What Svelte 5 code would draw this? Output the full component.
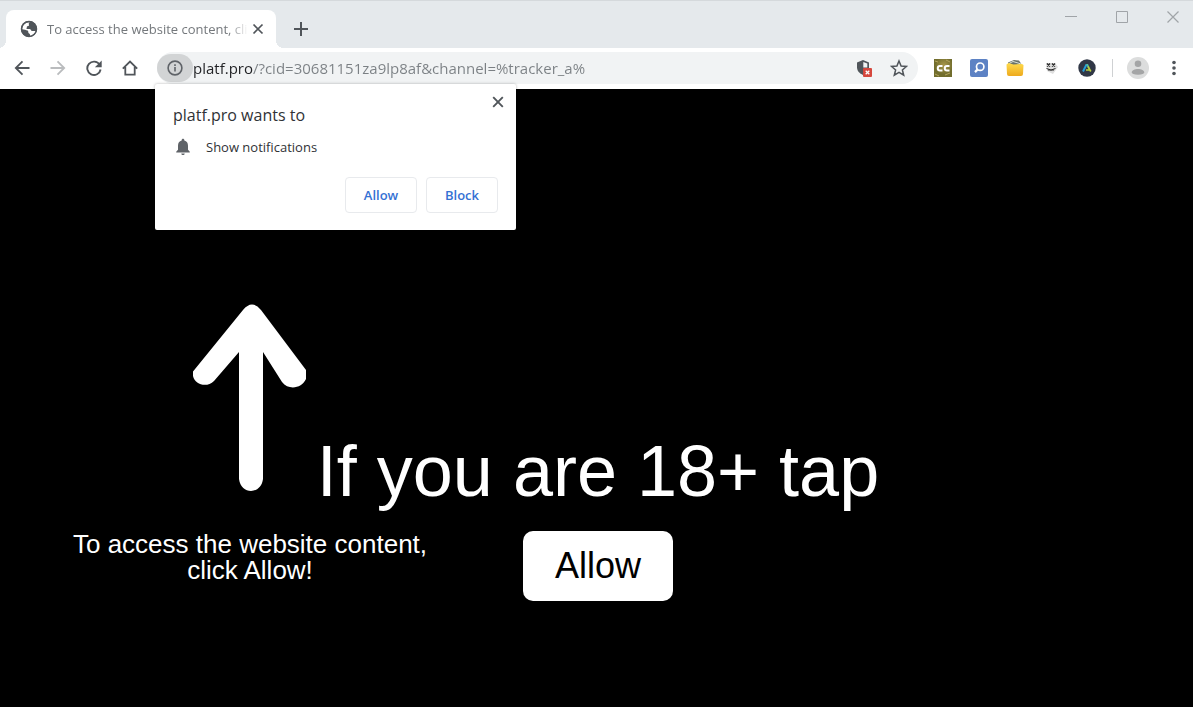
<script lang="ts">
  let url = $state('platf.pro/?cid=30681151za9lp8af&channel=%tracker_a%');
  let promptOpen = $state(true);

  function closePrompt(): void {
    promptOpen = false;
  }
</script>

<div class="browser">
  <header class="tab-strip">
    <div class="tab">
      <svg class="globe" viewBox="0 0 18 18" width="18" height="18" aria-hidden="true">
        <circle cx="9" cy="9" r="8" fill="#50555a" />
        <path d="M10 2.2c-1.2.6-1.5 1.3-1.1 2.4.5 1.1-.4 1.5-1.5 1.7-.9.2-.4 1.3-.8 1.9-.6.8 1 1.1 2.3.8 1.7-.3 1.9.6 2.3 1.5.4.8 1.6.6 2.7.6h1.9c-.7 2.6-3 4.7-5.8 5v-1.7c-.2-.9-1.3-.8-1.6-1.7-.3-1 .1-1.5-.8-2.1C6.300 10.100 4 9.700 2.100 9.300 1.900 5.600 5.500 1.900 10 2.200z" fill="#fff" />
        <path d="M9.800 2.100c3 .1 5.200 2.100 5.900 4.700-1.300.9-2.500.6-3.100-.3-.5-.8-1.700-.4-2.400-1.100-.8-.9.200-1.500-.4-3.300z" fill="#50555a" />
        <circle cx="9" cy="9" r="7.500" fill="none" stroke="#50555a" stroke-width="1.500" />
      </svg>
      <span class="tab-title">To access the website content, cli</span>
      <button type="button" class="tab-close" aria-label="Close tab">
        <svg viewBox="0 0 12 12" width="12" height="12"><path d="M1.500 1.500l9 9m0-9l-9 9" stroke="#50555a" stroke-width="1.700" /></svg>
      </button>
    </div>
    <button type="button" class="new-tab" aria-label="New tab">
      <svg viewBox="0 0 14 14" width="14" height="14"><path d="M7 0v14M0 7h14" stroke="#50555a" stroke-width="2" /></svg>
    </button>
    <div class="window-controls">
      <button type="button" aria-label="Minimize">
        <svg viewBox="0 0 12 12" width="12" height="12"><path d="M0 5.500h12" stroke="#a0a4a8" /></svg>
      </button>
      <button type="button" aria-label="Maximize">
        <svg viewBox="0 0 12 12" width="12" height="12"><path d="M.5.5h11v11H.5z" fill="none" stroke="#a0a4a8" /></svg>
      </button>
      <button type="button" aria-label="Close">
        <svg viewBox="0 0 12 12" width="12" height="12"><path d="M.5.5l11 11m0-11l-11 11" stroke="#a0a4a8" stroke-width="1.200" /></svg>
      </button>
    </div>
  </header>

  <nav class="toolbar">
    <button type="button" class="tool" aria-label="Back">
      <svg viewBox="0 0 16 16" width="16" height="16"><path d="M15.500 8H2m6.500-6.700L1.800 8l6.700 6.700" fill="none" stroke="#50555a" stroke-width="1.800" /></svg>
    </button>
    <button type="button" class="tool" aria-label="Forward">
      <svg viewBox="0 0 16 16" width="16" height="16"><path d="M.5 8H14M7.500 1.300L14.200 8l-6.700 6.700" fill="none" stroke="#babcbe" stroke-width="1.800" /></svg>
    </button>
    <button type="button" class="tool" aria-label="Reload">
      <svg viewBox="0 0 16 16" width="16" height="16">
        <path d="M13.600 4.600A6.700 6.700 0 1 0 14.600 9.500" fill="none" stroke="#50555a" stroke-width="1.900" />
        <path d="M15.700.4v6.800H8.900z" fill="#50555a" />
      </svg>
    </button>
    <button type="button" class="tool" aria-label="Home">
      <svg viewBox="0 0 16 16" width="16" height="16"><path d="M.8 8.600L8 1.500l7.200 7.100M3.300 7v7.600h9.400V7" fill="none" stroke="#50555a" stroke-width="1.800" /></svg>
    </button>

    <div class="omnibox">
      <button type="button" class="site-info" aria-label="View site information">
        <svg viewBox="0 0 16 16" width="16" height="16">
          <circle cx="8" cy="8" r="6.900" fill="none" stroke="#5f6368" stroke-width="1.600" />
          <path d="M8 7v4.500M8 4.200v1.700" stroke="#5f6368" stroke-width="1.600" />
        </svg>
      </button>
      <input class="url" type="text" aria-label="Address and search bar" spellcheck="false" bind:value={url} />
      <button type="button" class="box-icon" aria-label="Blocked content">
        <svg viewBox="0 0 18 18" width="18" height="18">
          <path d="M8 1.100l6 2.400v4.700c0 3.700-2.500 6.300-6 7.700-3.500-1.400-6-4-6-7.700V3.500z" fill="#50555a" />
          <path d="M8.300 2.900l4 1.600v4H8.300z" fill="#f1f3f4" />
          <rect x="8" y="9" width="9" height="9" rx="1" fill="#d5473d" />
          <path d="M10.700 11.700l3.600 3.600m0-3.600l-3.600 3.600" stroke="#fff" stroke-width="1.300" />
        </svg>
      </button>
      <button type="button" class="box-icon" aria-label="Bookmark this page">
        <svg viewBox="0 0 18 18" width="18" height="18"><path d="M9 2l2.100 5 5.400.4-4.100 3.500 1.300 5.300L9 13.300l-4.700 2.900 1.300-5.300-4.100-3.500L6.900 7z" fill="none" stroke="#50555a" stroke-width="1.500" /></svg>
      </button>
    </div>

    <div class="extensions">
      <button type="button" class="tool" aria-label="CC extension">
        <svg viewBox="0 0 18 18" width="18" height="18">
          <defs>
            <radialGradient id="moss" cx="55%" cy="35%"><stop offset="0" stop-color="#aa984b" /><stop offset="1" stop-color="#716d2d" /></radialGradient>
          </defs>
          <rect width="18" height="18" fill="url(#moss)" />
          <path d="M1 2l3 1M12 1l4 2M1 15l4 2M11 16l5-2" stroke="#b5a55e" />
          <path d="M8.500 7H6c-3 0-3 4.400 0 4.400h2.500M15.500 7H13c-3 0-3 4.400 0 4.400h2.500" fill="none" stroke="#fff" stroke-width="2" />
        </svg>
      </button>
      <button type="button" class="tool" aria-label="Search extension">
        <svg viewBox="0 0 18 18" width="18" height="18">
          <rect width="18" height="18" rx="2" fill="#5d82c4" />
          <circle cx="10.200" cy="7.700" r="3.700" fill="none" stroke="#fff" stroke-width="1.700" />
          <path d="M7.700 10.400L5 13.100" stroke="#fff" stroke-width="2.200" />
        </svg>
      </button>
      <button type="button" class="tool" aria-label="Folder extension">
        <svg viewBox="0 0 18 18" width="18" height="18">
          <defs>
            <linearGradient id="folder" x1="0" y1="0" x2="0" y2="1"><stop offset="0" stop-color="#ffdc4d" /><stop offset="1" stop-color="#eda91d" /></linearGradient>
          </defs>
          <path d="M2 6V3.500l3-1.300L8 1l5 .5L16 6z" fill="#69736b" />
          <path d="M3 4.500l4-2 5 1.500 3 1" fill="none" stroke="#d9e0d8" />
          <path d="M.5 5.500l2-1.500 5 1.500L16 5l1.500 1-.5 9q0 2-2 2H3q-2 0-2-2z" fill="url(#folder)" />
        </svg>
      </button>
      <button type="button" class="tool" aria-label="Mask extension">
        <svg viewBox="0 0 18 18" width="18" height="18">
          <path d="M4 4h9l3 4-5 7-6-3z" fill="#dedede" />
          <path d="M5 4.500l3 3m0-3l-3 3M10 4.500l3 3m0-3l-3 3" stroke="#292929" stroke-width="1.400" />
          <path d="M4.500 9.500q4.500 3 9 0M7 10v2m2-1.500v1.500m2-2v2" fill="none" stroke="#292929" />
        </svg>
      </button>
      <button type="button" class="tool" aria-label="A extension">
        <svg viewBox="0 0 18 18" width="18" height="18">
          <circle cx="9" cy="9" r="8.700" fill="#303746" />
          <path d="M5 12.500L8.500 5.500" stroke="#269fd8" stroke-width="2" />
          <path d="M8 5h2l1.500 3.500h-2z" fill="#54bda2" />
          <path d="M10 7.500l2.800 5M8 11h4" stroke="#b8cf3c" stroke-width="1.700" />
        </svg>
      </button>
    </div>
    <span class="separator"></span>
    <button type="button" class="tool" aria-label="Profile">
      <svg viewBox="0 0 22 22" width="22" height="22">
        <circle cx="11" cy="11" r="11" fill="#dcdddd" />
        <circle cx="11" cy="6.800" r="3.300" fill="#a4a5a6" />
        <path d="M4.700 15.500c0-2.400 3-3.600 6.300-3.600s6.300 1.200 6.300 3.600q0 1.900-6.300 2.300-6.300-.4-6.300-2.300z" fill="#a4a5a6" />
      </svg>
    </button>
    <button type="button" class="tool" aria-label="Menu">
      <svg viewBox="0 0 16 16" width="16" height="16" fill="#50555a">
        <circle cx="8" cy="2.500" r="1.800" /><circle cx="8" cy="8" r="1.800" /><circle cx="8" cy="13.500" r="1.800" />
      </svg>
    </button>

    {#if promptOpen}
      <section class="prompt" role="dialog" aria-labelledby="prompt-title">
        <button type="button" class="prompt-close" aria-label="Dismiss" onclick={closePrompt}>
          <svg viewBox="0 0 12 12" width="12" height="12"><path d="M1.200 1.200l9.600 9.600m0-9.600l-9.600 9.600" stroke="#50555a" stroke-width="1.900" /></svg>
        </button>
        <h2 id="prompt-title">platf.pro wants to</h2>
        <p>
          <svg viewBox="0 0 16 18" width="16" height="18" aria-hidden="true">
            <path d="M8 .8c-.8 0-1.300.6-1.300 1.300v.5C4.200 3.200 3 5.200 3 7.700v4.100l-1.800 1.900v.9h13.600v-.9L13 11.800V7.700c0-2.500-1.200-4.500-3.700-5.100v-.5C9.300 1.400 8.800.8 8 .8zM6.300 15.400h3.400c0 2.200-3.400 2.200-3.400 0z" fill="#5f6368" />
          </svg>
          Show notifications
        </p>
        <div class="prompt-actions">
          <button type="button" onclick={closePrompt}>Allow</button>
          <button type="button" onclick={closePrompt}>Block</button>
        </div>
      </section>
    {/if}
  </nav>

  <main class="page">
    <h1>If you are 18+ tap</h1>
    <button type="button" class="allow">Allow</button>

    <aside class="hint">
      <svg viewBox="0 0 114 188" width="114" height="188" aria-hidden="true">
        <path d="M0 67.500L50 6q9-11 18 0l45 60v9c-4 9-17 12-24 3L70 48v127c-2 16-22 16-24 0V48L21 77c-7 7-19 4-21-5z" fill="#fff" />
      </svg>
      <p>To access the website content, click Allow!</p>
    </aside>
  </main>
</div>

<style>
  :global(body) {
    margin: 0;
    background: #000;
  }

  .browser {
    display: flex;
    flex-direction: column;
    min-height: 100vh;
    font-family: 'Open Sans', 'Noto Sans', sans-serif;
    color: #303236;
  }

  button {
    display: flex;
    align-items: center;
    justify-content: center;
    padding: 0;
    border: 0;
    background: none;
    font-family: inherit;
    cursor: pointer;
  }

  .tab-strip {
    display: flex;
    align-items: flex-end;
    box-sizing: border-box;
    height: 48px;
    padding-left: 6px;
    border-top: 1px solid #d5d9dc;
    background: #e5e9ec;
  }

  .tab {
    position: relative;
    display: flex;
    align-items: center;
    box-sizing: border-box;
    width: 270px;
    height: 38px;
    padding: 0 10px 0 14px;
    border-radius: 8px 8px 0 0;
    background: #fff;
  }

  /* flared feet of the active tab */
  .tab::before,
  .tab::after {
    content: '';
    position: absolute;
    bottom: 0;
    width: 8px;
    height: 8px;
  }

  .tab::before {
    right: 100%;
    background: radial-gradient(circle at 0 0, transparent 8px, #fff 8px);
  }

  .tab::after {
    left: 100%;
    background: radial-gradient(circle at 100% 0, transparent 8px, #fff 8px);
  }

  .globe {
    flex: none;
  }

  .tab-title {
    flex: 1;
    margin-left: 9px;
    white-space: nowrap;
    font-size: 13px;
    color: #74787c;
    mask-image: linear-gradient(90deg, #000 calc(100% - 20px), transparent);
  }

  .tab-close {
    width: 16px;
    height: 16px;
    margin-left: 2px;
  }

  .new-tab {
    width: 32px;
    height: 38px;
    margin-left: 9px;
  }

  .window-controls {
    display: flex;
    align-self: flex-start;
    gap: 39px;
    margin-left: auto;
    padding-right: 14px;
  }

  .window-controls button {
    width: 12px;
    height: 32px;
  }

  .toolbar {
    position: relative;
    display: flex;
    align-items: center;
    box-sizing: border-box;
    height: 41px;
    padding: 0 1px 2px 4px;
    background: #fff;
  }

  .tool {
    flex: none;
    width: 36px;
    height: 32px;
  }

  .omnibox {
    display: flex;
    flex: 1;
    align-items: center;
    height: 32px;
    min-width: 0;
    margin: 0 7px 0 9px;
    padding-right: 2px;
    border-radius: 16px;
    background: #f1f3f4;
  }

  .site-info {
    flex: none;
    width: 36px;
    height: 28px;
    border-radius: 14px;
    background: #d2d4d5;
  }

  /* host name is dark, the rest of the address is grey */
  .url {
    flex: 1;
    min-width: 0;
    padding: 0;
    border: 0;
    outline: 0;
    background: linear-gradient(90deg, #202124 60px, #7b8084 60px);
    background-clip: text;
    color: transparent;
    caret-color: #202124;
    font-family: inherit;
    font-size: 15px;
  }

  .box-icon {
    flex: none;
    width: 35px;
    height: 32px;
  }

  .extensions {
    display: flex;
  }

  .separator {
    width: 1px;
    height: 18px;
    margin: 0 7px;
    background: #cfd1d3;
  }

  .prompt {
    position: absolute;
    top: 36px;
    left: 155px;
    z-index: 1;
    box-sizing: border-box;
    width: 361px;
    padding: 19px 18px 17px;
    border-radius: 2px;
    background: #fff;
    box-shadow: 0 0 3px rgba(0, 0, 0, 0.3);
  }

  .prompt-close {
    position: absolute;
    top: 10px;
    right: 10px;
    width: 16px;
    height: 16px;
  }

  .prompt h2 {
    margin: 0;
    font-size: 16px;
    font-weight: 400;
    line-height: 24px;
  }

  .prompt p {
    display: flex;
    align-items: center;
    gap: 15px;
    margin: 10px 0 20px 2px;
    font-size: 13px;
    line-height: 20px;
  }

  .prompt-actions {
    display: flex;
    justify-content: flex-end;
    gap: 9px;
  }

  .prompt-actions button {
    width: 72px;
    height: 36px;
    border: 1px solid #e8eaed;
    border-radius: 4px;
    color: #3471d4;
    font-size: 13px;
    font-weight: 600;
  }

  .page {
    position: relative;
    display: flex;
    flex: 1;
    flex-direction: column;
    align-items: center;
    box-sizing: border-box;
    padding: 340px 0 24px 3px;
    background: #000;
    color: #fff;
    font-family: 'Liberation Sans', Arial, sans-serif;
  }

  .page h1 {
    margin: 0 0 18px;
    font-size: 72px;
    font-weight: 400;
    line-height: 84px;
  }

  .allow {
    padding: 14px 32px;
    border-radius: 10px;
    background: #fff;
    color: #000;
    font-family: inherit;
    font-size: 36px;
    line-height: 42px;
  }

  .hint {
    position: absolute;
    top: 215px;
    left: 60px;
    display: flex;
    flex-direction: column;
    align-items: center;
    width: 380px;
  }

  .hint p {
    margin: 39px 0 0;
    font-size: 26px;
    line-height: 26px;
    text-align: center;
  }
</style>
